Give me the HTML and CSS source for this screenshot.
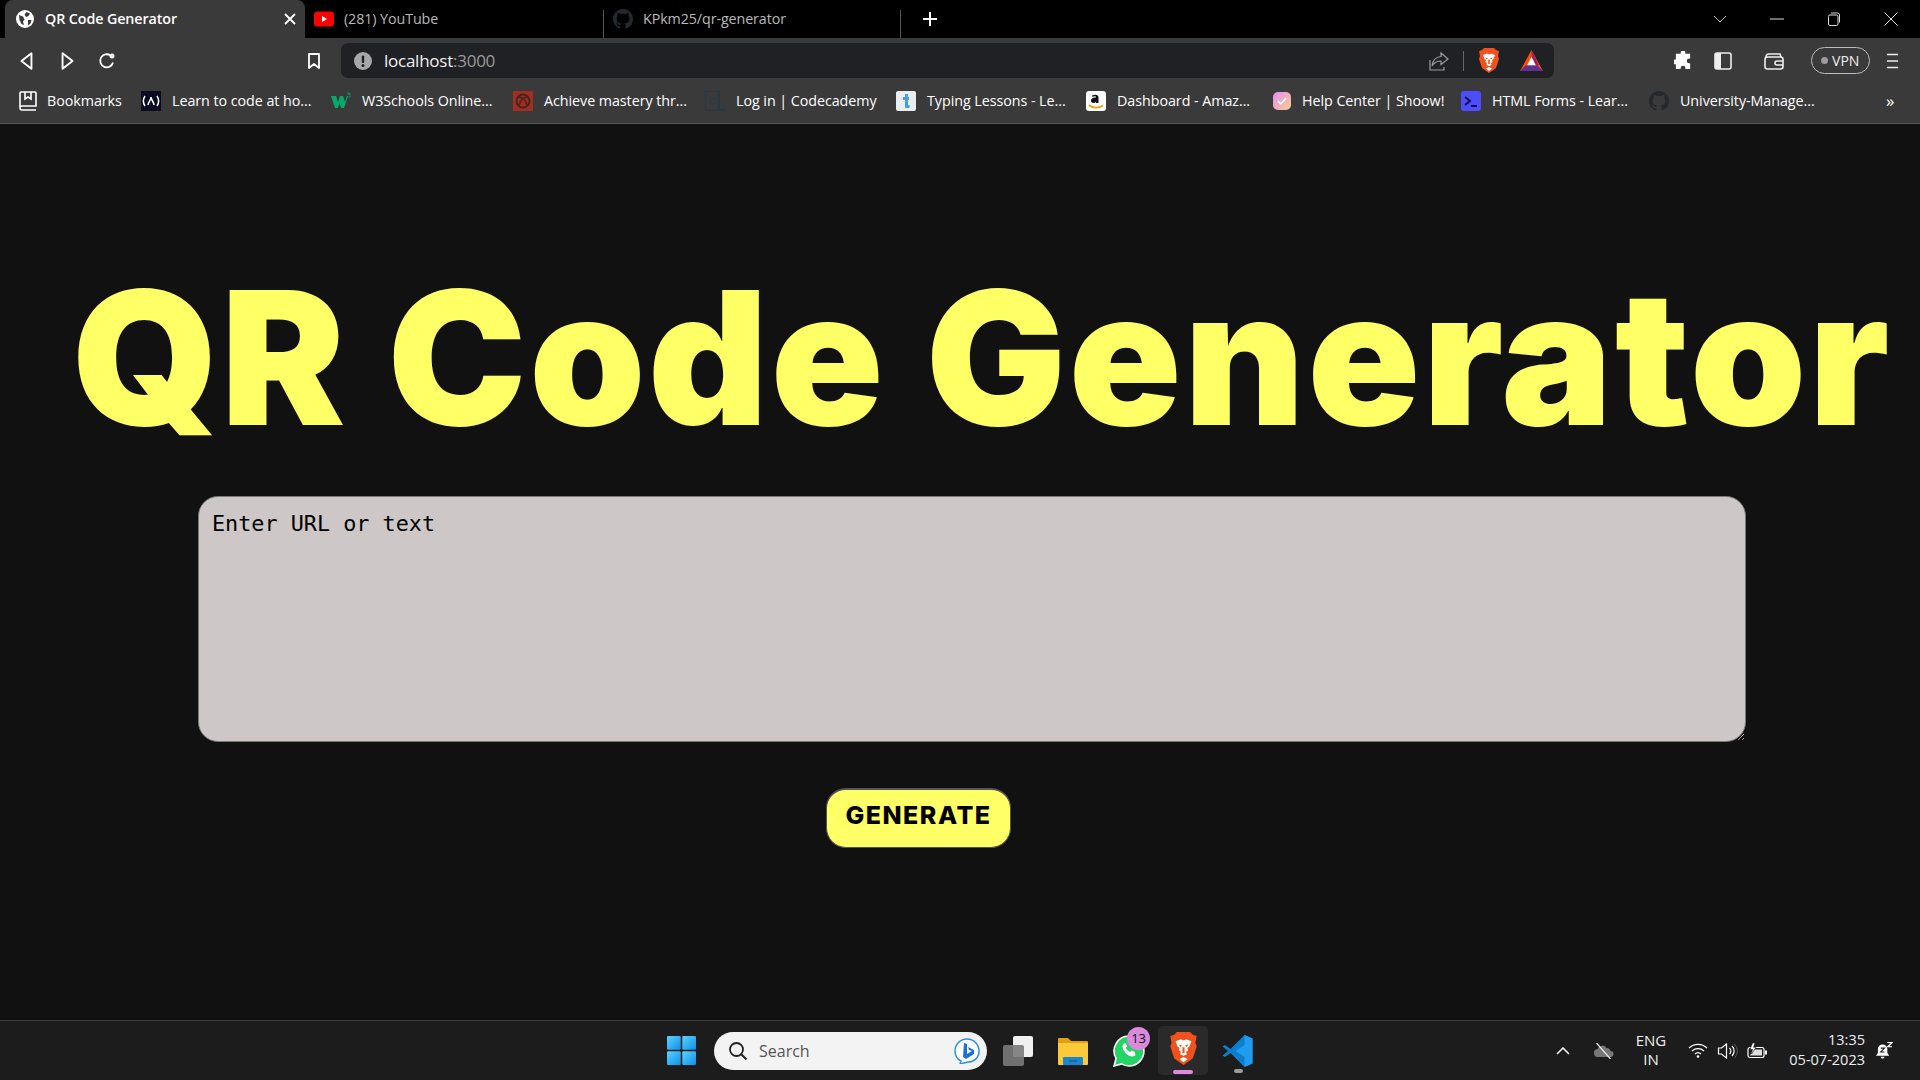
FILE: index.html
```html
<!DOCTYPE html>
<html lang="en">
<head>
<meta charset="utf-8">
<title>QR Code Generator</title>
<link rel="stylesheet" href="styles.css">
</head>
<body>
<header class="chrome">
  <div class="tabstrip">
    <div class="tab tab-active">
      <svg class="fav" viewBox="0 0 18 18"><circle cx="9" cy="9" r="9" fill="#fff"/><path d="M3 5l4 1.500 1.500 3-1.500 2 1 3.500-2.500-1-2-4zM10.500 2l3.500 1.500-1.500 2.500-2.500 1-1.500-2.500zM12 10l3.500 0-1 3.500-2.500 2z" fill="#3a3a3a"/></svg>
      <span class="tab-title">QR Code Generator</span>
      <svg class="tab-x" viewBox="0 0 12 12"><path d="M1 1l10 10M11 1L1 11" stroke="#fff" stroke-width="1.800"/></svg>
    </div>
    <div class="tab tab-yt">
      <svg class="fav-w" viewBox="0 0 20 15"><rect width="20" height="15" rx="3.500" fill="#f00"/><path d="M8 4.500l5 3-5 3z" fill="#fff"/></svg>
      <span class="tab-title dim">(281) YouTube</span>
    </div>
    <div class="tab tab-gh">
      <svg class="fav-w" viewBox="0 0 16 16"><path fill="#24292e" d="M8 0C3.600 0 0 3.600 0 8c0 3.500 2.300 6.500 5.500 7.600.4.100.5-.2.5-.4v-1.400c-2.200.5-2.700-1-2.700-1-.4-.9-.9-1.200-.9-1.200-.7-.5.1-.5.1-.5.8.1 1.200.8 1.200.8.700 1.200 1.900.9 2.300.7.1-.5.3-.9.5-1.100-1.800-.2-3.600-.9-3.600-4 0-.9.300-1.600.8-2.100-.1-.2-.4-1 .1-2.100 0 0 .7-.2 2.200.8a7.600 7.600 0 0 1 4 0c1.500-1 2.200-.8 2.200-.8.400 1.100.2 1.900.1 2.100.5.600.8 1.300.8 2.100 0 3.100-1.900 3.700-3.700 3.900.3.300.6.800.6 1.500v2.200c0 .2.100.5.600.4A8 8 0 0 0 16 8c0-4.400-3.600-8-8-8z"/></svg>
      <span class="tab-title dim">KPkm25/qr-generator</span>
    </div>
    <svg class="new-tab" viewBox="0 0 16 16"><path d="M8 1v14M1 8h14" stroke="#fff" stroke-width="2"/></svg>
    <div class="win-controls">
      <svg class="wc" viewBox="0 0 14 14"><path d="M1 4l6 6 6-6" fill="none" stroke="#bbb"/></svg>
      <svg class="wc" viewBox="0 0 14 14"><path d="M0 7h14" stroke="#ddd"/></svg>
      <svg class="wc" viewBox="0 0 14 14"><rect x="1.500" y="3" width="9.500" height="10.500" rx="1.500" fill="none" stroke="#ddd"/><path d="M4 1h6.500a2 2 0 0 1 2 2v7.500" fill="none" stroke="#ddd"/></svg>
      <svg class="wc" viewBox="0 0 14 14"><path d="M.5.5l13 13M13.500.5l-13 13" stroke="#ddd"/></svg>
    </div>
  </div>
  <div class="toolbar">
    <div class="nav-buttons">
      <svg class="tool" viewBox="0 0 16 18"><path d="M12 2v14L3 9z" fill="none" stroke="#fff" stroke-width="1.700" stroke-linejoin="round"/></svg>
      <svg class="tool" viewBox="0 0 16 18"><path d="M4 2v14l9-7z" fill="none" stroke="#fff" stroke-width="1.700" stroke-linejoin="round"/></svg>
      <svg class="tool" viewBox="0 0 18 18"><path d="M15 10.500A6.500 6.500 0 1 1 12.500 3.500" fill="none" stroke="#fff" stroke-width="1.800"/><circle cx="14" cy="4" r="2.500" fill="#fff"/></svg>
    </div>
    <svg class="bookmark-star" viewBox="0 0 14 18"><path d="M2 2h10v14l-5-4-5 4z" fill="none" stroke="#fff" stroke-width="1.800" stroke-linejoin="round"/></svg>
    <div class="address">
      <svg class="info" viewBox="0 0 18 18"><circle cx="9" cy="9" r="9" fill="#a8a8ab"/><rect x="7.800" y="3.500" width="2.400" height="7.500" rx="1" fill="#202124"/><circle cx="9" cy="13.500" r="1.500" fill="#202124"/></svg>
      <span class="url">localhost<span class="port">:3000</span></span>
      <div class="addr-right">
        <svg class="share" viewBox="0 0 20 20"><path d="M12 2l7 6-7 5.500V10c-4 0-7 1.500-9 5 .5-5 3.500-9 9-9.500z" fill="none" stroke="#9b9b9b" stroke-width="1.200"/><path d="M1 9v10h14v-3" fill="none" stroke="#9b9b9b" stroke-width="1.200"/></svg>
        <span class="addr-sep"></span>
        <svg class="brave" viewBox="0 0 20 25"><path d="M5 0h10l2 2 3 1-1 5 1 3-3 9-7 5-7-5-3-9 1-3-1-5 3-1z" fill="#f1511b"/><path d="M4 7l4-1.500 2 1 2-1 4 1.500-1.500 4-1.500 1 .5 2-1.500 1 .5 2-2.500 1-2.500-1 .5-2-1.500-1 .5-2-1.500-1zM10 19l3 1.500-3 2.500-3-2.500z" fill="#fff"/><path d="M6.500 9.500l2.500.8-1.500 1zM13.500 9.500l-2.500.8 1.500 1zM9.200 11.500v4.500h1.600v-4.500z" fill="#f1511b"/></svg>
        <svg class="bat" viewBox="0 0 24 22"><path d="M12 0l12 22H0z" fill="#ff5000"/><path d="M0 22l6-6h12l6 6z" fill="#662d91"/><path d="M12 0l8 16H12z" fill="#9e1f63"/><path d="M12 7l4.500 9h-9z" fill="#fff"/></svg>
      </div>
    </div>
    <div class="tools-right">
      <svg class="puzzle" viewBox="0 0 20 20"><path d="M7 2a2.500 2.500 0 0 1 5 0v1h5v5h-1a2.500 2.500 0 0 0 0 5h1v6h-5v-1a2.500 2.500 0 0 0-5 0v1H2v-5H1a2.500 2.500 0 0 1 0-5h1V3h5z" fill="#fff"/></svg>
      <svg class="sidebar" viewBox="0 0 18 18"><rect x="1" y="1" width="16" height="16" rx="2" fill="none" stroke="#eee" stroke-width="1.600"/><rect x="1" y="1" width="6" height="16" fill="#eee"/></svg>
      <svg class="wallet" viewBox="0 0 20 18"><path d="M2 5c0-2 1-3 3-3h11l1 3" fill="none" stroke="#eee" stroke-width="1.600"/><rect x="1" y="5" width="18" height="12" rx="2.500" fill="none" stroke="#eee" stroke-width="1.600"/><path d="M19 9h-6a2 2 0 0 0 0 4h6" fill="none" stroke="#eee" stroke-width="1.600"/></svg>
      <div class="vpn"><span class="vpn-dot"></span>VPN</div>
      <svg class="menu" viewBox="0 0 14 18"><path d="M1 2h12M1 9h12M1 16h12" stroke="#eee" stroke-width="1.800"/></svg>
    </div>
  </div>
  <nav class="bookmarks">
    <div class="bm bm-first">
      <svg class="bm-ico" viewBox="0 0 18 20"><path d="M1 16V2a1 1 0 0 1 1-1h14a1 1 0 0 1 1 1v13H3a2 2 0 0 0 0 4h14" fill="none" stroke="#fff" stroke-width="1.600"/><path d="M6 1v7l3-2 3 2V1" fill="none" stroke="#fff" stroke-width="1.600"/></svg>
      <span>Bookmarks</span>
    </div>
    <div class="bm">
      <svg class="bm-ico" viewBox="0 0 20 20"><rect width="20" height="20" fill="#0a0a23"/><path d="M4 5c-2 3-2 7 0 10M16 5c2 3 2 7 0 10M7 14c0-3 3-4 3-8 0 3 3 5 3 8" fill="none" stroke="#fff" stroke-width="1.500"/></svg>
      <span>Learn to code at ho...</span>
    </div>
    <div class="bm">
      <svg class="bm-ico" viewBox="0 0 20 20"><path d="M0 5h5l2 6 2-6h3l2 6 2-6h1l-4 12h-3l-1.500-5L7 17H4z" fill="#04aa6d"/><path d="M16 2h3v1h-2l2 1v2h-3" fill="none" stroke="#04aa6d" stroke-width=".7"/></svg>
      <span>W3Schools Online...</span>
    </div>
    <div class="bm">
      <svg class="bm-ico" viewBox="0 0 20 20"><rect width="20" height="20" rx="1" fill="#9f2f22"/><circle cx="10" cy="10" r="6.500" fill="none" stroke="#4b2320" stroke-width="2"/><path d="M5 6c5 0 8 3 9 9M15 6c-5 0-8 3-9 9" fill="none" stroke="#4b2320" stroke-width="1.500"/></svg>
      <span>Achieve mastery thr...</span>
    </div>
    <div class="bm bm-wide">
      <svg class="bm-ico" viewBox="0 0 20 20"><rect x="0" y="0" width="14" height="20" rx="2" fill="none" stroke="#203a4a" stroke-width="1.500"/><path d="M10 8a3 3 0 1 0 0 4" fill="none" stroke="#203a4a"/><path d="M15 19h5" stroke="#203a4a" stroke-width="1.500"/></svg>
      <span>Log in | Codecademy</span>
    </div>
    <div class="bm">
      <svg class="bm-ico" viewBox="0 0 20 20"><rect width="20" height="20" rx="2" fill="#e9eef1"/><path d="M10.500 3v12.500h3M7 7.500h6" fill="none" stroke="#4a9fe0" stroke-width="3"/></svg>
      <span>Typing Lessons - Le...</span>
    </div>
    <div class="bm">
      <svg class="bm-ico" viewBox="0 0 20 20"><rect width="20" height="20" rx="3" fill="#fff"/><path d="M6 4.500c3-1.500 6-1 6.500 1.500v6h-2.500v-1c-2 2-5.500 1-5-2 .4-2 3-2.500 5-2.500 0-1.500-1.500-1.500-3.500-.5z" fill="#111"/><path d="M3 14c4 3.500 10 3.500 14 .5" fill="none" stroke="#f90" stroke-width="1.800"/></svg>
      <span>Dashboard - Amaz...</span>
    </div>
    <div class="bm">
      <svg class="bm-ico bm-ico-small" viewBox="0 0 18 18"><defs><linearGradient id="sh" x1="0" y1="0" x2="1" y2="1"><stop offset="0" stop-color="#e58cf2"/><stop offset="1" stop-color="#f6d08c"/></linearGradient></defs><rect width="18" height="18" rx="5" fill="url(#sh)"/><path d="M5 9l3 3 5-6" fill="none" stroke="#fff" stroke-width="1.500"/></svg>
      <span>Help Center | Shoow!</span>
    </div>
    <div class="bm">
      <svg class="bm-ico" viewBox="0 0 20 20"><rect width="20" height="20" rx="3" fill="#4d4dff"/><path d="M4 6l5 4-5 4M10 15h6" fill="none" stroke="#11114a" stroke-width="2"/></svg>
      <span>HTML Forms - Lear...</span>
    </div>
    <div class="bm">
      <svg class="bm-ico" viewBox="0 0 16 16"><path fill="#24292e" d="M8 0C3.600 0 0 3.600 0 8c0 3.500 2.300 6.500 5.500 7.600.4.100.5-.2.5-.4v-1.400c-2.200.5-2.700-1-2.700-1-.4-.9-.9-1.200-.9-1.200-.7-.5.1-.5.1-.5.8.1 1.200.8 1.200.8.700 1.200 1.900.9 2.300.7.1-.5.3-.9.5-1.100-1.800-.2-3.600-.9-3.600-4 0-.9.300-1.600.8-2.100-.1-.2-.4-1 .1-2.100 0 0 .7-.2 2.200.8a7.600 7.600 0 0 1 4 0c1.500-1 2.200-.8 2.200-.8.400 1.100.2 1.900.1 2.100.5.600.8 1.300.8 2.100 0 3.100-1.900 3.700-3.700 3.900.3.300.6.800.6 1.500v2.200c0 .2.100.5.600.4A8 8 0 0 0 16 8c0-4.400-3.600-8-8-8z"/></svg>
      <span>University-Manage...</span>
    </div>
    <span class="bm-more">»</span>
  </nav>
</header>

<main class="page">
  <h1 class="title">QR Code Generator</h1>
  <textarea class="qr-input" placeholder="Enter URL or text"></textarea>
  <button class="generate" type="button">GENERATE</button>
</main>

<footer class="taskbar">
  <div class="task-center">
    <svg class="start" viewBox="0 0 30 30"><defs><linearGradient id="w1" x1="0" y1="0" x2="1" y2="1"><stop offset="0" stop-color="#5fd3ff"/><stop offset="1" stop-color="#0a8fe8"/></linearGradient></defs><rect x="0" y="0" width="14.200" height="14.200" rx="1" fill="url(#w1)"/><rect x="15.800" y="0" width="14.200" height="14.200" rx="1" fill="url(#w1)"/><rect x="0" y="15.800" width="14.200" height="14.200" rx="1" fill="url(#w1)"/><rect x="15.800" y="15.800" width="14.200" height="14.200" rx="1" fill="url(#w1)"/></svg>
    <div class="search">
      <svg class="search-ico" viewBox="0 0 20 20"><circle cx="8.500" cy="8.500" r="6.500" fill="none" stroke="#222" stroke-width="1.800"/><path d="M13 13l5.500 5.500" stroke="#222" stroke-width="2"/></svg>
      <span class="search-text">Search</span>
      <svg class="bing" viewBox="0 0 26 26"><path d="M13 1a12 12 0 0 1 12 12c0 7-5 11-11 11l-8 2 1-3C3 21 1 18 1 13A12 12 0 0 1 13 1z" fill="#fff" stroke="#2b8fe8" stroke-width="1.500"/><path d="M10 5l3 1v10l5-3-3-1-1-3 6 3v4l-8 5-3-2z" fill="#1672d8"/></svg>
    </div>
    <svg class="app taskview" viewBox="0 0 30 30"><rect x="10" y="0" width="20" height="21" rx="2" fill="#f0f0f0"/><rect x="0" y="9" width="21" height="21" rx="2" fill="#7a7a7a" fill-opacity=".9"/></svg>
    <svg class="app folder" viewBox="0 0 30 30"><path d="M0 3a1 1 0 0 1 1-1h9l3 3h16a1 1 0 0 1 1 1v3H0z" fill="#e2a20e"/><path d="M0 7h30v21a1 1 0 0 1-1 1H1a1 1 0 0 1-1-1z" fill="#fcc93a"/><rect x="5" y="21" width="20" height="8" rx="1" fill="#1a86d0"/><path d="M11 25h8" stroke="#0b4f87"/></svg>
    <div class="app whatsapp">
      <svg class="wa" viewBox="0 0 30 30"><path d="M15 1a14 14 0 0 1 0 28c-2.500 0-5-.7-7-1.900L1 29l1.900-7A14 14 0 0 1 15 1z" fill="#25d366" stroke="#fff" stroke-width="1.500"/><path d="M10 8c-2 2-1 6 2 9s7 4 9 2l-.5-3-3-1.500-1.500 1.500c-2-1-3-2-4-4l1.500-1.500L12 8z" fill="#fff"/></svg>
      <span class="badge">13</span>
    </div>
    <div class="app-tile">
      <svg class="brave-lg" viewBox="0 0 20 25"><path d="M5 0h10l2 2 3 1-1 5 1 3-3 9-7 5-7-5-3-9 1-3-1-5 3-1z" fill="#f1511b"/><path d="M4 7l4-1.500 2 1 2-1 4 1.500-1.500 4-1.500 1 .5 2-1.500 1 .5 2-2.500 1-2.500-1 .5-2-1.500-1 .5-2-1.500-1zM10 19l3 1.500-3 2.500-3-2.500z" fill="#fff"/><path d="M6.500 9.500l2.500.8-1.500 1zM13.500 9.500l-2.500.8 1.500 1zM9.200 11.500v4.500h1.600v-4.500z" fill="#f1511b"/></svg>
      <span class="running running-active"></span>
    </div>
    <div class="app vscode">
      <svg class="vs" viewBox="0 0 30 32"><path d="M22 0l8 3.500v25L22 32 8 18l-5.500 4L0 20.500 5.500 16 0 11.500 2.500 10 8 14z" fill="#0a7fd0"/><path d="M22 0l8 3.500v25L22 32V22l-9-6 9-6z" fill="#1f9cf0"/></svg>
      <span class="running"></span>
    </div>
  </div>
  <div class="tray">
    <svg class="chev" viewBox="0 0 14 8"><path d="M1 7l6-6 6 6" fill="none" stroke="#fff" stroke-width="1.500"/></svg>
    <svg class="cloud" viewBox="0 0 20 16"><path d="M5 14a4 4 0 0 1-1-8 5 5 0 0 1 9-1 4 4 0 0 1 4 3 3 3 0 0 1 0 6z" fill="#777"/><path d="M3 0l14 16" stroke="#eee" stroke-width="1.200"/></svg>
    <div class="lang"><span>ENG</span><span>IN</span></div>
    <svg class="wifi" viewBox="0 0 20 15"><path d="M1 5a13 13 0 0 1 18 0M4 8a9 9 0 0 1 12 0M7 11a4.500 4.500 0 0 1 6 0" fill="none" stroke="#fff" stroke-width="1.300"/><circle cx="10" cy="13.500" r="1.300" fill="#fff"/></svg>
    <svg class="vol" viewBox="0 0 20 16"><path d="M1 5h3l5-4v14l-5-4H1z" fill="none" stroke="#fff" stroke-width="1.200"/><path d="M12 5a4 4 0 0 1 0 6M14.500 3a7 7 0 0 1 0 10" fill="none" stroke="#fff" stroke-width="1.200"/><path d="M17 1a10 10 0 0 1 0 14" fill="none" stroke="#555"/></svg>
    <svg class="batt" viewBox="0 0 20 16"><rect x="1" y="4.500" width="16" height="10" rx="2" fill="#1c1c1c" stroke="#fff" stroke-width="1.200"/><path d="M6 6.500h9v6H3z" fill="#ddd"/><rect x="18" y="7.500" width="2" height="4" fill="#fff"/><path d="M5.500 0L3 6.500h2.500L4.500 11 9 4.500H6.500L8 0z" fill="#fff" stroke="#1c1c1c" stroke-width=".6"/></svg>
    <div class="clock"><span>13:35</span><span>05-07-2023</span></div>
    <svg class="bell" viewBox="0 0 18 20"><path d="M7 3a5 5 0 0 1 5 5v4l2 3H0l2-3V8a5 5 0 0 1 5-5z" fill="#fff"/><path d="M5 16h4a2 2 0 0 1-4 0z" fill="#fff"/><path d="M12 1h5l-4.500 4.500H17" fill="none" stroke="#fff" stroke-width="1.300"/><path d="M5 7h4l-4 4h4" fill="none" stroke="#1c1c1c" stroke-width="1.200"/></svg>
  </div>
</footer>
</body>
</html>
```

FILE: styles.css
```css
* { box-sizing: border-box; }
html, body { height: 100%; }
body {
  margin: 0;
  height: 1080px;
  overflow: hidden;
  display: flex;
  flex-direction: column;
  background: #111111;
  font-family: "Open Sans", "Noto Sans", sans-serif;
  color: #fff;
}

/* browser chrome */
.chrome { flex: none; background: #3a3a3a; }
.tabstrip {
  height: 38px;
  background: #000;
  display: flex;
  align-items: center;
  padding-left: 5px;
}
.tab {
  height: 38px;
  display: flex;
  align-items: center;
  font-size: 14.300px;
}
.tab-active {
  width: 300px;
  padding: 0 9px 0 11px;
  background: #3a3a3a;
  border-radius: 8px 8px 0 0;
  font-weight: 600;
  color: #fff;
}
.tab-yt {
  width: 298px;
  padding-left: 9px;
}
.tab-gh {
  position: relative;
  width: 298px;
  padding-left: 10px;
}
.tab-gh::before,
.tab-gh::after {
  content: "";
  position: absolute;
  top: 10px;
  bottom: 0;
  width: 1px;
  background: #555;
}
.tab-gh::before { left: 0; }
.tab-gh::after { right: 0; }
.fav { width: 18px; height: 18px; flex: none; margin-right: 11px; }
.fav-w { width: 20px; height: 20px; flex: none; margin-right: 10px; }
.tab-title { white-space: nowrap; flex: 1; letter-spacing: -.1px; padding-bottom: 2px; }
.dim { color: #b8b8b8; font-weight: 400; }
.tab-x { width: 12px; height: 12px; flex: none; }
.new-tab { width: 16px; height: 16px; margin-left: 21px; }
.win-controls {
  margin-left: auto;
  display: flex;
  align-items: center;
  gap: 43px;
  padding-right: 22px;
}
.wc { width: 14px; height: 14px; }

.toolbar {
  height: 41px;
  display: flex;
  align-items: flex-start;
  padding-left: 7px;
}
.nav-buttons {
  width: 120px;
  height: 35px;
  margin-top: 5px;
  display: flex;
  align-items: center;
  justify-content: space-around;
}
.tool { width: 18px; height: 20px; }
.bookmark-star { width: 14px; height: 20px; margin: 13px 20px 0 180px; }
.address {
  width: 1213px;
  height: 35px;
  margin-top: 5px;
  background: #202124;
  border-radius: 7px;
  display: flex;
  align-items: center;
  padding: 0 10px 0 13px;
}
.info { width: 18px; height: 18px; flex: none; }
.url { margin-left: 12px; font-size: 17px; color: #f0f0f0; letter-spacing: -.25px; }
.port { color: #9a9a9a; }
.addr-right { margin-left: auto; display: flex; align-items: center; }
.share { width: 20px; height: 20px; }
.addr-sep { width: 1px; height: 20px; background: #666; margin: 0 15px 0 14px; }
.brave { width: 20px; height: 25px; }
.bat { width: 23px; height: 21px; margin-left: 21px; margin-right: 1px; }
.tools-right {
  flex: 1;
  height: 35px;
  margin-top: 5px;
  display: flex;
  align-items: center;
  padding-left: 120px;
}
.puzzle { width: 19px; height: 19px; }
.sidebar { width: 18px; height: 18px; margin-left: 21px; }
.wallet { width: 20px; height: 18px; margin-left: 32px; }
.vpn {
  width: 58.500px;
  height: 27px;
  margin-left: 27px;
  border: 1.500px solid #bbb;
  border-radius: 14px;
  display: flex;
  align-items: center;
  justify-content: center;
  gap: 4px;
  font-size: 14px;
  color: #eee;
}
.vpn-dot { width: 7px; height: 7px; border-radius: 50%; background: #9a9aa0; }
.menu { width: 13px; height: 18px; margin-left: 16px; }

.bookmarks {
  height: 45px;
  display: grid;
  grid-template-columns: 123px 190px 182px 192px 191px 190px 187px 188px 188px 236px 20px;
  align-items: center;
  padding: 0 0 1px 18px;
  border-bottom: 1px solid #555;
  font-size: 14.300px;
  color: #fff;
}
.bm { display: flex; align-items: center; gap: 11px; white-space: nowrap; letter-spacing: -.05px; }
.bm-first { gap: 9px; }
.bm-wide { gap: 11px; }
.bm-ico { width: 20px; height: 20px; flex: none; }
.bm-ico-small { width: 18px; height: 18px; }
.bm-more { font-size: 17px; line-height: 1; padding-left: 1px; }

/* page */
.page {
  flex: 1;
  min-height: 0;
  display: flex;
  flex-direction: column;
  align-items: flex-start;
  background: #111111;
}
.title {
  margin: 141px 0 0 72px;
  font-family: Inter, "Noto Sans", sans-serif;
  font-weight: 900;
  font-size: 186px;
  line-height: 186px;
  letter-spacing: 2.600px;
  white-space: nowrap;
  color: #ffff66;
}
.qr-input {
  display: block;
  width: 1548px;
  height: 246px;
  margin: 45px 0 0 198px;
  padding: 14px 13px;
  border: 1px solid #777;
  border-radius: 20px;
  background: #cdc7c7;
  font-family: "DejaVu Sans Mono", monospace;
  font-size: 21.800px;
  color: #000;
  outline: none;
}
.qr-input::placeholder { color: #000; opacity: 1; }
.generate {
  width: 185px;
  height: 60px;
  margin: 46px 0 0 826px;
  padding: 0 0 8px;
  border: 2px solid #555;
  border-width: 2px 1px 1px;
  border-radius: 20px;
  background: #ffff66;
  color: #000;
  font-family: Inter, "Noto Sans", sans-serif;
  font-weight: 800;
  font-size: 25px;
  letter-spacing: 1.500px;
}

/* taskbar */
.taskbar {
  flex: none;
  height: 60px;
  background: #1c1c1c;
  border-top: 1px solid #3c3c3c;
  display: flex;
  align-items: center;
  padding-left: 667px;
}
.task-center { display: flex; align-items: center; }
.start { width: 29px; height: 29px; }
.search {
  width: 273px;
  height: 38px;
  margin-left: 18px;
  background: #f3f3f3;
  border-radius: 19px;
  display: flex;
  align-items: center;
  padding: 0 7px 0 14px;
  color: #555;
}
.search-ico { width: 20px; height: 20px; flex: none; }
.search-text { margin-left: 11px; font-size: 16px; color: #555; }
.bing { width: 26px; height: 26px; margin-left: auto; }
.app { flex: none; }
.taskview { width: 30px; height: 30px; margin-left: 16px; }
.folder { width: 30px; height: 30px; margin-left: 25px; }
.whatsapp { position: relative; width: 32px; height: 32px; margin-left: 25px; }
.wa { width: 32px; height: 32px; display: block; }
.badge {
  position: absolute;
  top: -8px;
  left: 14px;
  width: 23px;
  height: 23px;
  border-radius: 50%;
  background: #d98ad8;
  color: #111;
  font-size: 13px;
  line-height: 23px;
  text-align: center;
  letter-spacing: -.3px;
}
.app-tile {
  position: relative;
  width: 50px;
  height: 49px;
  margin-left: 13px;
  background: #2a2a2a;
  border-radius: 5px;
  display: flex;
  align-items: center;
  justify-content: center;
  padding-bottom: 4px;
}
.brave-lg { width: 27px; height: 33px; }
.running {
  position: absolute;
  left: 50%;
  bottom: -6px;
  width: 9px;
  height: 4px;
  margin-left: -4px;
  border-radius: 2px;
  background: #9a9a9a;
}
.running-active { width: 20px; margin-left: -10px; bottom: 1px; background: #e08adf; }
.vscode { position: relative; width: 31px; height: 32px; margin-left: 14px; }
.vs { width: 31px; height: 32px; display: block; }

.tray {
  margin-left: auto;
  display: flex;
  align-items: center;
  padding-right: 27px;
}
.chev { width: 14px; height: 8px; }
.cloud { width: 21px; height: 16px; margin-left: 23px; }
.lang {
  width: 40px;
  margin-left: 17px;
  display: flex;
  flex-direction: column;
  align-items: center;
  font-size: 15px;
  line-height: 19px;
  color: #eee;
  transform: translateY(-1px);
}
.wifi { width: 20px; height: 15px; margin-left: 17px; }
.vol { width: 21px; height: 16px; margin-left: 9px; }
.batt { width: 20px; height: 16px; margin-left: 9px; }
.clock {
  width: 98px;
  margin-bottom: 2px;
  display: flex;
  flex-direction: column;
  align-items: flex-end;
  font-size: 14.500px;
  line-height: 20px;
  color: #eee;
}
.bell { width: 17px; height: 20px; margin-left: 11px; }
```
